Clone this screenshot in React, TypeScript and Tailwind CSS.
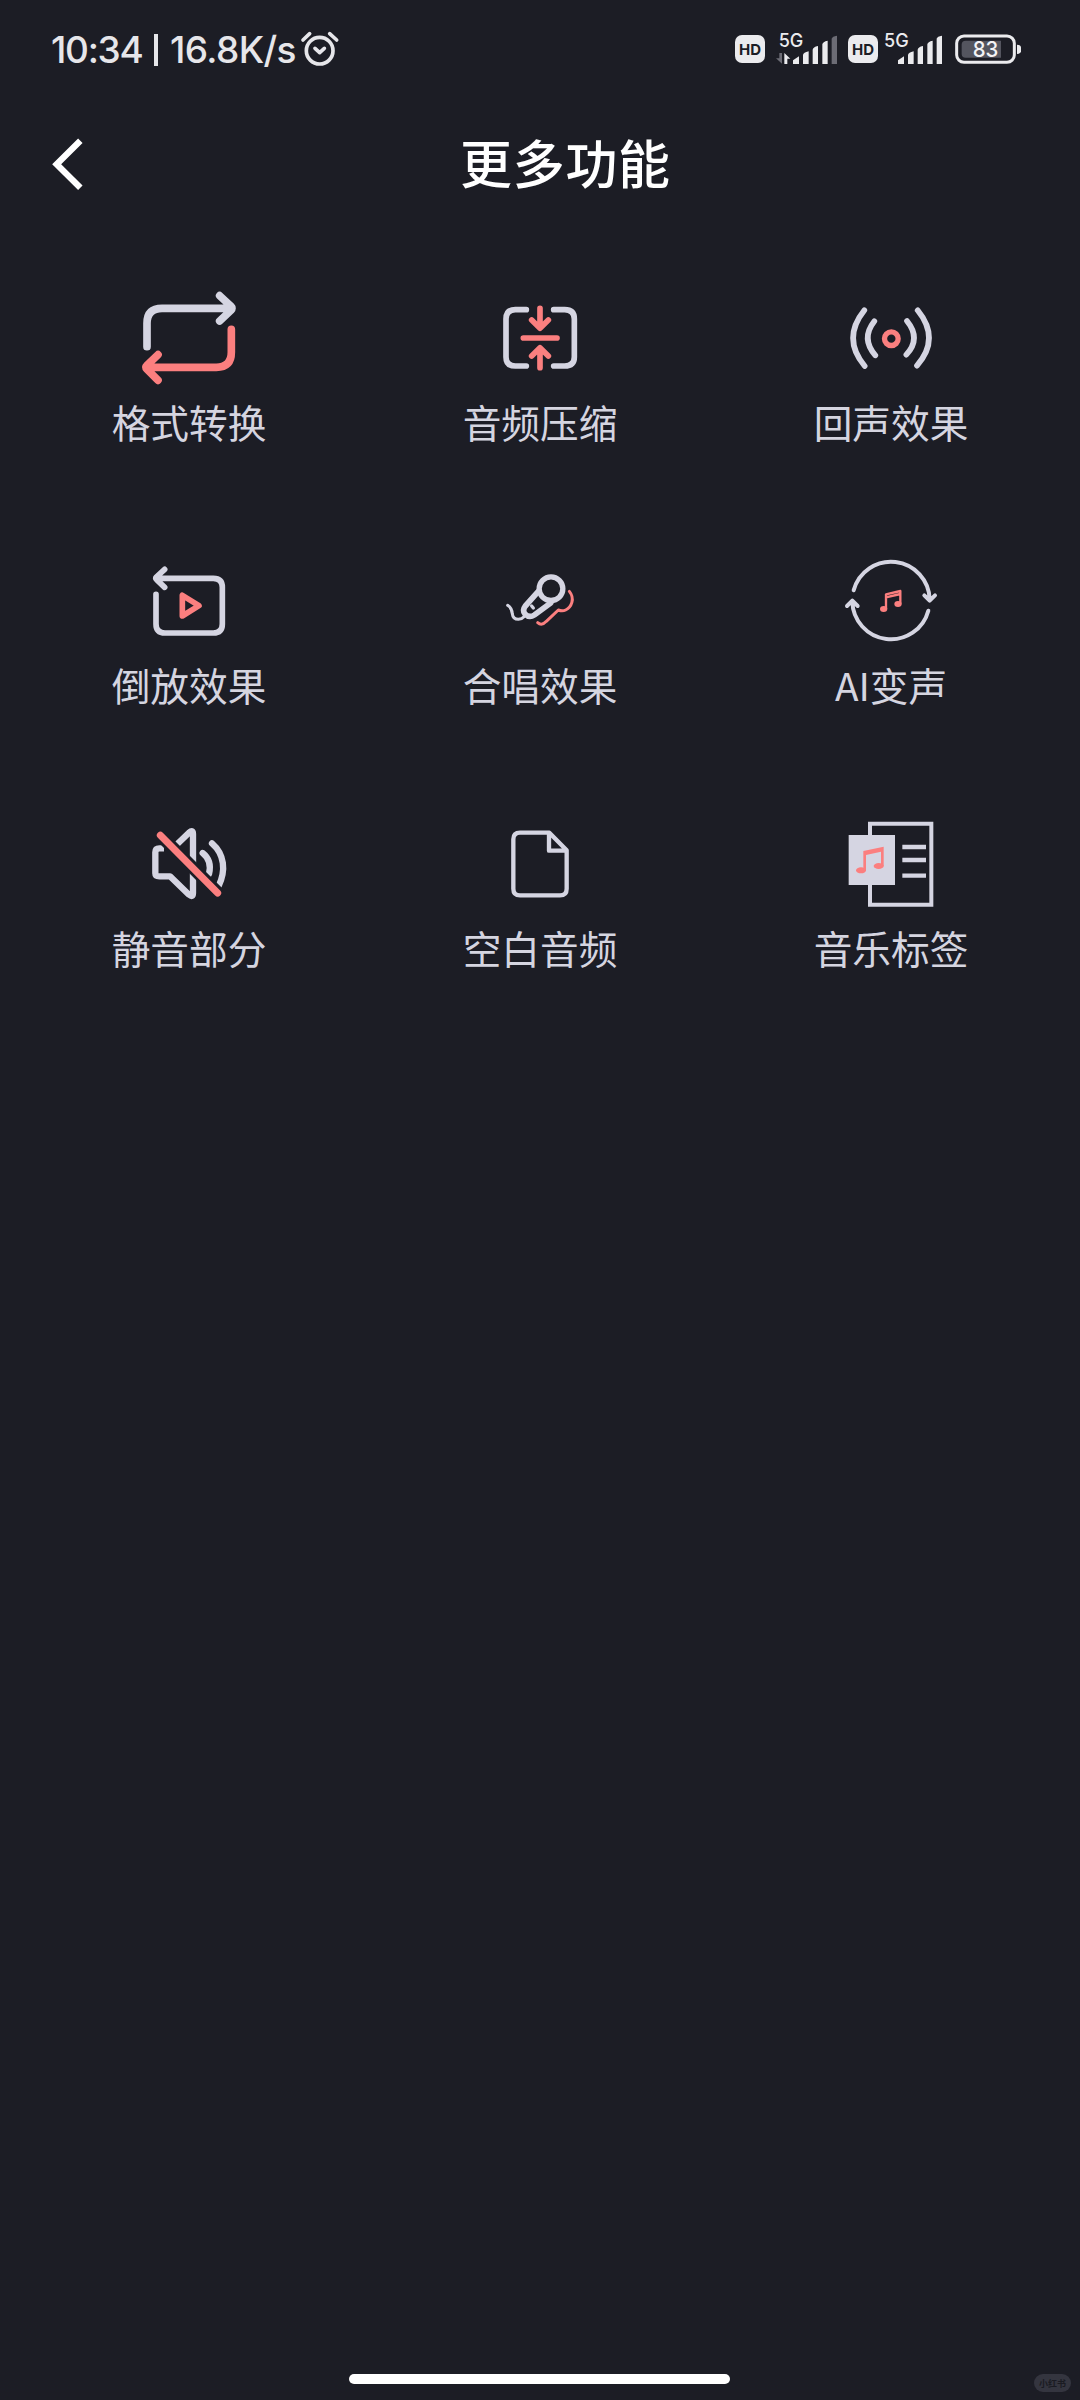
import type { ReactNode } from 'react';

interface Feature {
    label: string;
    viewBox: string;
    icon: ReactNode;
}

const LIGHT = '#d5d5e2';
const RED = '#fb7f7f';

const features: Feature[] = [
    {
        label: '格式转换',
        viewBox: '87 24 360 360',
        icon: (
            <g strokeWidth="23">
                <path d="M141 230V160Q141 115 186 115H390M359 77L393 109Q399 115 393 121L359 153" stroke={LIGHT} />
                <path d="M394 178V247Q394 292 349 292H143M174 254L141 286Q135 292 141 298L174 331" stroke={RED} />
            </g>
        ),
    },
    {
        label: '音频压缩',
        viewBox: '90 24 360 360',
        icon: (
            <>
                <path d="M229 119H196Q168 119 168 147V261Q168 288 196 288H229M311 119H344Q373 119 373 147V261Q373 288 344 288H311" stroke={LIGHT} strokeWidth="17" />
                <path d="M220 204H321M270 115V174M245 150L270 175L295 150M270 293V234M245 258L270 233L295 258" stroke={RED} strokeWidth="17" />
            </>
        ),
    },
    {
        label: '回声效果',
        viewBox: '93 24 360 360',
        icon: (
            <>
                <g stroke={LIGHT} strokeWidth="17">
                    <path d="M193 121Q125 206 194 288M353 121Q422 206 351 287" />
                    <path d="M223 154Q182 206 226 256M321 153Q364 206 319 254" />
                </g>
                <circle cx="274" cy="206" r="20.500" stroke={RED} strokeWidth="16" />
            </>
        ),
    },
    {
        label: '倒放效果',
        viewBox: '87 3 360 360',
        icon: (
            <>
                <path d="M168 115H340Q367 115 367 142V252Q367 279 340 279H195Q168 279 168 252V163M194 88L169 111Q165 115 169 118L194 142" stroke={LIGHT} strokeWidth="17" />
                <path d="M247 166V228L297 197Z" stroke={RED} strokeWidth="17" />
            </>
        ),
    },
    {
        label: '合唱效果',
        viewBox: '90 3 360 360',
        icon: (
            <>
                <g stroke={LIGHT}>
                    <circle cx="303" cy="146" r="35.500" strokeWidth="16" />
                    <path d="M265 154L226 198Q216 211 225 222Q238 235 253 225L302 189" strokeWidth="17" />
                    <path d="M245 198L250 204" strokeWidth="10" />
                    <path d="M173 196Q186 204 187 222Q189 238 205 238Q216 237 222 230" strokeWidth="9" />
                </g>
                <path d="M358 154C376 176 364 202 347 210Q337 215 325 210L289 244Q275 259 263 248" stroke={RED} strokeWidth="9" />
            </>
        ),
    },
    {
        label: 'AI变声',
        viewBox: '93 3 360 360',
        icon: (
            <>
                <path d="M161 151A116 116 0 0 1 389 178M373 166L389 182L405 166M385 212A116 116 0 0 1 157 184M141 198L157 182L173 198" stroke={LIGHT} strokeWidth="12" />
                <path d="M258 206V163L301 153V190M258 172L301 162" stroke={RED} strokeWidth="7" />
                <ellipse cx="251" cy="207" rx="11" ry="9" fill={RED} />
                <ellipse cx="294" cy="192" rx="11" ry="9" fill={RED} />
            </>
        ),
    },
    {
        label: '静音部分',
        viewBox: '87 12 360 360',
        icon: (
            <>
                <g stroke={LIGHT} strokeWidth="19">
                    <path d="M192 145H178Q166 145 166 157V220Q166 229 178 229H210L267 284Q279 294 279 279V102Q279 88 267 98L232 132" strokeLinecap="butt" />
                    <path d="M308 159Q337 182 327 222M336 130C374 163 378 212 356 258" />
                </g>
                <path d="M180 105L355 280" stroke="#1c1d25" strokeWidth="38" strokeLinecap="butt" />
                <path d="M181 106L353 279" stroke={RED} strokeWidth="21" />
            </>
        ),
    },
    {
        label: '空白音频',
        viewBox: '90 12 360 360',
        icon: (
            <path d="M298 98H210Q190 98 190 118V266Q190 286 210 286H330Q350 286 350 266V151ZM297 101V152H349" stroke={LIGHT} strokeWidth="13" />
        ),
    },
    {
        label: '音乐标签',
        viewBox: '93 12 360 360',
        icon: (
            <>
                <path d="M210 71H394V314H210Z" stroke={LIGHT} strokeWidth="12" strokeLinejoin="miter" />
                <path d="M146 105H285V255H146Z" fill={LIGHT} />
                <path d="M307 141H378M307 180H378M307 227H378" stroke={LIGHT} strokeWidth="13" strokeLinecap="butt" />
                <path d="M190 153L251 140V199H243V155L198 165V212H190Z" fill={RED} />
                <ellipse cx="183" cy="211" rx="15" ry="9" fill={RED} />
                <ellipse cx="236" cy="198" rx="15" ry="9" fill={RED} />
            </>
        ),
    },
];

function HdBadge() {
    return (
        <span className="flex h-[28px] w-[30px] items-center justify-center rounded-[7px] bg-[#ebebee] font-['Inter'] text-[15px] leading-none font-bold text-[#1c1d25]">
            HD
        </span>
    );
}

function Signal({ weak = false }: { weak?: boolean }) {
    return (
        <svg className={weak ? 'ml-[10px] h-[52px] w-[64px]' : 'ml-[4px] h-[52px] w-[62px]'} viewBox={weak ? '165 9 192 156' : '486 9 186 156'}>
            <text x={weak ? 176 : 492} y="81" fontSize="56" fontFamily="Inter" fontWeight="500" textLength="74" lengthAdjust="spacingAndGlyphs" fill="#ebebee">5G</text>
            <g fill="#ebebee" transform={weak ? undefined : 'translate(315 0)'}>
                <path d="M219 132V121L237 109V132ZM249 132V105Q250 98 266 94V132ZM278 132V89Q279 81 294 78V132ZM307 132V73Q308 65 323 62V132Z" />
                <path d="M335 132V56Q337 49 351 47V132Z" fill={weak ? '#6c6c75' : '#ebebee'} />
            </g>
            {weak && (
                <>
                    <path d="M178 99H186V131L168 115H178Z" fill="#6c6c75" />
                    <path d="M193 99L211 116H202V132H193Z" fill="#ebebee" />
                </>
            )}
        </svg>
    );
}

function StatusBar() {
    return (
        <div className="flex h-[98px] items-center justify-between pr-[58px] pl-[51px]">
            <div className="flex items-center font-['Inter'] text-[37px] leading-none font-medium text-[#e6e6ea]">
                <span className="w-[103px] tracking-[-1.3px]">10:34</span>
                <span className="mt-[2px] h-[32px] w-[4px] bg-[#e6e6ea]" />
                <span className="ml-[12px] w-[131px] tracking-[-0.6px] whitespace-nowrap">16.8K/s</span>
                <svg className="mt-[-2px] -ml-px h-[38px] w-[40px]" viewBox="814 58 120 114" fill="none" stroke="#e6e6ea" strokeWidth="11" strokeLinecap="round" strokeLinejoin="round">
                    <circle cx="873" cy="123" r="40" />
                    <path d="M859 116L873 129L887 116M823 91L843 72M903 72L924 91" />
                </svg>
            </div>
            <div className="flex items-center">
                <HdBadge />
                <Signal weak />
                <span className="ml-[9px]"><HdBadge /></span>
                <Signal />
                <svg className="ml-[11px] h-[30px] w-[67px]" viewBox="705 43 201 90">
                    <rect x="710" y="49" width="173" height="79" rx="22" fill="none" stroke="#ebebee" strokeWidth="9" />
                    <path d="M737 63H843V114H737Q725 114 725 102V75Q725 63 737 63Z" fill="#54555f" />
                    <path d="M891 75Q903 76 903 83V95Q903 102 891 103Z" fill="#ebebee" />
                    <text x="758" y="112" fontSize="65" fontFamily="Inter" fontWeight="500" textLength="77" lengthAdjust="spacingAndGlyphs" fill="#f3f3f5">83</text>
                </svg>
            </div>
        </div>
    );
}

export default function App() {
    return (
        <div className="flex h-[2400px] w-[1080px] flex-col bg-[#1c1d25] font-['Noto_Sans_CJK_SC',sans-serif]">
            <StatusBar />

            <header className="flex h-[132px] items-center pl-[51px]">
                <svg className="h-[54px] w-[34px]" viewBox="63 382 102 162" fill="none" stroke="#fff" strokeWidth="19">
                    <path d="M151 393L80 463.500L151 534" />
                </svg>
                <h1 className="mt-[-4px] ml-[375px] text-[52px] leading-none font-medium tracking-[0.7px] text-white">更多功能</h1>
            </header>

            <main className="mt-[48px] grid grid-cols-3 gap-y-[93px] px-[13.5px]">
                {features.map((f) => (
                    <button key={f.label} className="flex h-[170px] flex-col items-center">
                        <svg className="size-[120px] shrink-0" viewBox={f.viewBox} fill="none" strokeLinecap="round" strokeLinejoin="round">
                            {f.icon}
                        </svg>
                        <span className="mt-[-2.5px] text-[38.7px] leading-[50px] whitespace-nowrap text-[#d5d5e0]">{f.label}</span>
                    </button>
                ))}
            </main>

            <footer className="mt-auto grid h-[32px] grid-cols-[349px_381px_1fr] items-start">
                <div className="col-start-2 mt-[6px] h-[10px] rounded-full bg-white" />
                <div className="mt-[6px] mr-[9px] flex h-[18px] w-[37px] items-center justify-center justify-self-end rounded-full bg-[#34353f] text-[9px] leading-none font-bold text-[#1a1b22]">
                    小红书
                </div>
            </footer>
        </div>
    );
}
